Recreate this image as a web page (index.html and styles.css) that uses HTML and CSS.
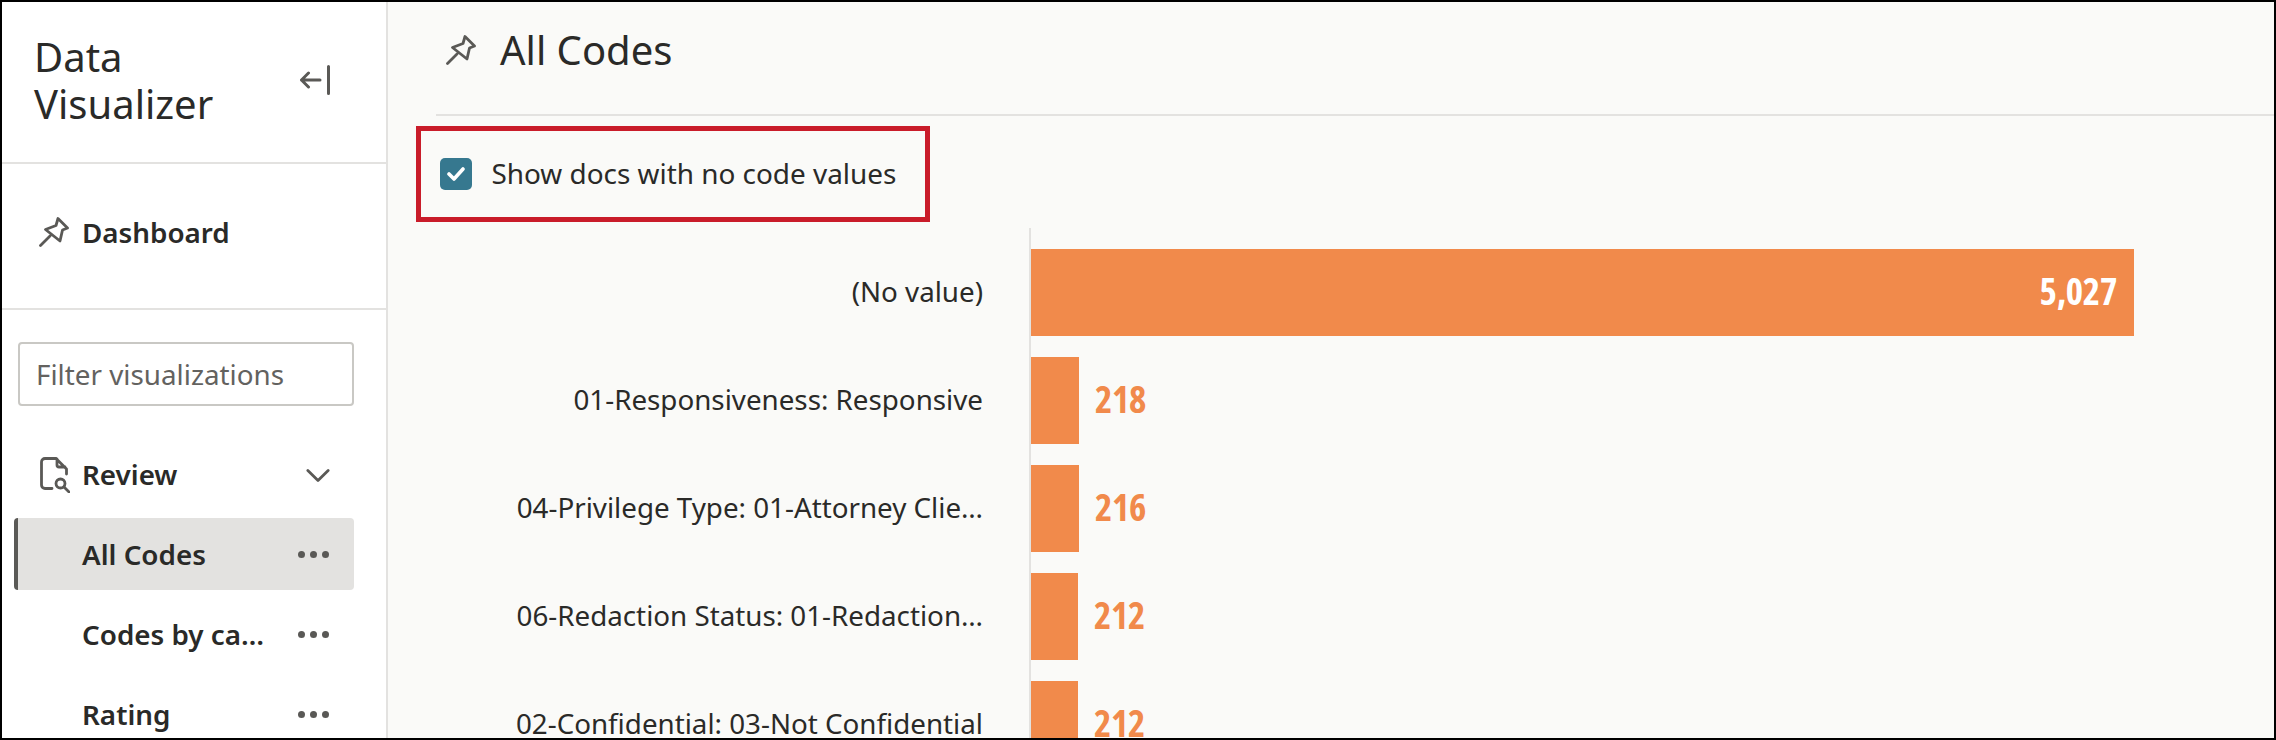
FILE: index.html
```html
<!DOCTYPE html>
<html lang="en">
<head>
    <meta charset="UTF-8">
    <title>Data Visualizer</title>
    <link rel="stylesheet" href="styles.css">
</head>
<body>
    <div class="frame">
        <aside class="sidebar">
            <div class="side-head">
                <h2>Data<br>Visualizer</h2>
                <svg class="collapse-icon" viewBox="0 0 30 30" fill="none" stroke="currentColor" stroke-width="3" stroke-linecap="round" stroke-linejoin="round">
                    <path d="M1.5 15H20M8.5 8 1.5 15l7 7M28.5 1.5v27"/>
                </svg>
            </div>
            <div class="side-dash">
                <svg class="pin-icon" viewBox="0 0 30 30" fill="none" stroke="currentColor" stroke-width="2.8" stroke-linecap="round" stroke-linejoin="round">
                    <path d="M19 1.5 28.5 11 23.5 13 21 24 6.5 12.5 17 8.5ZM1.5 28.5 11 19"/>
                </svg>
                <span>Dashboard</span>
            </div>
            <div class="side-nav">
                <input class="filter" type="text" placeholder="Filter visualizations">
                <div class="nav-group">
                    <svg class="doc-icon" viewBox="0 0 30 36" fill="none" stroke="currentColor" stroke-width="2.8" stroke-linecap="round" stroke-linejoin="round">
                        <path d="M16 1.5H5A3.5 3.5 0 0 0 1.5 5v23A3.5 3.5 0 0 0 5 31.5h7M16 1.5 26.5 12v5M17 2v6a2 2 0 0 0 2 2h6"/>
                        <circle cx="20.5" cy="26.5" r="4.5"/>
                        <path d="M24 30l5 5"/>
                    </svg>
                    <span class="nav-label">Review</span>
                    <svg class="chevron" viewBox="0 0 26 16" fill="none" stroke="currentColor" stroke-width="3" stroke-linecap="round" stroke-linejoin="round">
                        <path d="M2 2.5 13 13.5 24 2.5"/>
                    </svg>
                </div>
                <div class="nav-item active">
                    <span class="nav-label">All Codes</span>
                    <div class="dots"><i></i><i></i><i></i></div>
                </div>
                <div class="nav-item">
                    <span class="nav-label">Codes by ca…</span>
                    <div class="dots"><i></i><i></i><i></i></div>
                </div>
                <div class="nav-item">
                    <span class="nav-label">Rating</span>
                    <div class="dots"><i></i><i></i><i></i></div>
                </div>
            </div>
        </aside>

        <main class="main">
            <div class="page-head">
                <svg class="pin-icon" viewBox="0 0 30 30" fill="none" stroke="currentColor" stroke-width="2.8" stroke-linecap="round" stroke-linejoin="round">
                    <path d="M19 1.5 28.5 11 23.5 13 21 24 6.5 12.5 17 8.5ZM1.5 28.5 11 19"/>
                </svg>
                <h1>All Codes</h1>
            </div>
            <div class="callout">
                <span class="checkbox">
                    <svg viewBox="0 0 18 14" fill="none" stroke="#fff" stroke-width="3.6" stroke-linecap="round" stroke-linejoin="round">
                        <path d="M2 7l5 5 9-10"/>
                    </svg>
                </span>
                <span class="callout-text">Show docs with no code values</span>
            </div>
            <div class="chart">
                <div class="row">
                    <div class="label">(No value)</div>
                    <div class="track"><div class="bar" style="width: 1103px"><span class="num inside">5,027</span></div></div>
                </div>
                <div class="row">
                    <div class="label">01-Responsiveness: Responsive</div>
                    <div class="track"><div class="bar" style="width: 48px"></div><span class="num">218</span></div>
                </div>
                <div class="row">
                    <div class="label">04-Privilege Type: 01-Attorney Clie…</div>
                    <div class="track"><div class="bar" style="width: 48px"></div><span class="num">216</span></div>
                </div>
                <div class="row">
                    <div class="label">06-Redaction Status: 01-Redaction…</div>
                    <div class="track"><div class="bar" style="width: 47px"></div><span class="num">212</span></div>
                </div>
                <div class="row">
                    <div class="label">02-Confidential: 03-Not Confidential</div>
                    <div class="track"><div class="bar" style="width: 47px"></div><span class="num">212</span></div>
                </div>
            </div>
        </main>
    </div>
</body>
</html>
```

FILE: styles.css
```css
html, body {
    margin: 0;
    height: 100%;
}
body {
    font-family: "Noto Sans", "Open Sans", sans-serif;
    color: #2a2a28;
    background: #000;
}
.frame {
    display: flex;
    height: 740px;
    box-sizing: border-box;
    border: 2px solid #000;
    overflow: hidden;
    background: #fff;
}

/* sidebar */
.sidebar {
    width: 386px;
    flex: none;
    box-sizing: border-box;
    border-right: 2px solid #e3e2e0;
    background: #fff;
}
.side-head {
    height: 162px;
    box-sizing: border-box;
    border-bottom: 2px solid #e3e2e0;
    display: flex;
    justify-content: space-between;
    align-items: center;
    padding: 0 56px 0 32px;
}
.side-head h2 {
    margin: 0;
    font-size: 40px;
    line-height: 47px;
    font-weight: 400;
    padding-bottom: 4px;
}
.collapse-icon {
    width: 30px;
    height: 30px;
    margin-bottom: 5px;
    color: #5a5956;
}
.side-dash {
    height: 146px;
    box-sizing: border-box;
    border-bottom: 2px solid #e3e2e0;
    display: flex;
    align-items: center;
    gap: 13px;
    padding: 0 0 8px 37px;
    font-size: 27.8px;
    font-weight: 600;
}
.pin-icon {
    width: 30px;
    height: 30px;
    flex: none;
    color: #5a5956;
}
.side-nav {
    padding: 32px 32px 0 12px;
}
.filter {
    display: block;
    width: 336px;
    height: 64px;
    margin-left: 4px;
    box-sizing: border-box;
    border: 2px solid #c9c8c4;
    border-radius: 4px;
    padding: 0 16px;
    outline: none;
    font-family: inherit;
    font-size: 27.8px;
    background: #fff;
}
.filter::placeholder {
    color: #63625f;
    opacity: 1;
}
.nav-group {
    display: flex;
    align-items: center;
    height: 72px;
    margin: 33px 0 7px;
    padding-left: 26px;
    gap: 12px;
    font-size: 27.8px;
    font-weight: 600;
}
.doc-icon {
    width: 30px;
    height: 36px;
    color: #5a5956;
    flex: none;
}
.nav-group .nav-label {
    flex: 1;
    margin-bottom: 2px;
}
.chevron {
    width: 24px;
    height: 15px;
    margin-right: 24px;
    color: #5a5956;
}
.nav-item {
    display: flex;
    align-items: center;
    justify-content: space-between;
    height: 72px;
    margin-bottom: 8px;
    box-sizing: border-box;
    padding: 0 25px 0 68px;
    font-size: 27.8px;
    font-weight: 600;
    border-radius: 4px;
}
.nav-item.active {
    background: #e3e2e0;
    border-left: 4px solid #5a5956;
    padding-left: 64px;
}
.dots {
    display: flex;
    gap: 5px;
}
.dots i {
    width: 7px;
    height: 7px;
    border-radius: 50%;
    background: #5a5956;
}

/* main */
.main {
    flex: 1;
    min-width: 0;
    background: #fafaf8;
    padding-left: 26px;
}
.page-head {
    height: 114px;
    box-sizing: border-box;
    margin-left: 22px;
    border-bottom: 2px solid #e3e2e0;
    display: flex;
    align-items: flex-start;
    gap: 24px;
    padding: 30px 0 0 10px;
}
.page-head .pin-icon {
    margin-top: 3px;
}
.page-head h1 {
    margin: 0;
    font-size: 40px;
    line-height: 36px;
    font-weight: 400;
}
.callout {
    display: flex;
    align-items: center;
    gap: 20px;
    width: 514px;
    height: 96px;
    box-sizing: border-box;
    margin: 10px 0 0 2px;
    padding: 0 0 0 18.5px;
    border: 5.5px solid #c91c2a;
    font-size: 27.9px;
}
.callout-text {
    margin-bottom: 3px;
}
.checkbox {
    display: flex;
    align-items: center;
    justify-content: center;
    width: 32px;
    height: 32px;
    border-radius: 5px;
    background: #36788f;
    flex: none;
}
.checkbox svg {
    width: 18px;
    height: 14px;
}
.chart {
    margin-top: 6px;
}
.row {
    display: flex;
    height: 108px;
}
.label {
    width: 569px;
    flex: none;
    box-sizing: border-box;
    height: 87px;
    margin-top: 21px;
    line-height: 84px;
    text-align: right;
    white-space: nowrap;
    font-size: 27.75px;
}
.track {
    flex: 1;
    display: flex;
    align-items: flex-start;
    margin-left: 46px;
    border-left: 2px solid #e3e2e0;
    padding-top: 21px;
}
.bar {
    height: 87px;
    background: #f18a4b;
    display: flex;
    justify-content: flex-end;
    align-items: center;
}
.num {
    height: 87px;
    line-height: 84px;
    margin-left: 16px;
    font-family: "Open Sans", "Noto Sans", sans-serif;
    font-size: 37px;
    font-weight: 700;
    font-stretch: 75%;
    letter-spacing: -.3px;
    color: #f18a4b;
}
.num.inside {
    margin: 0 17px 0 0;
    color: #fff;
}
```
